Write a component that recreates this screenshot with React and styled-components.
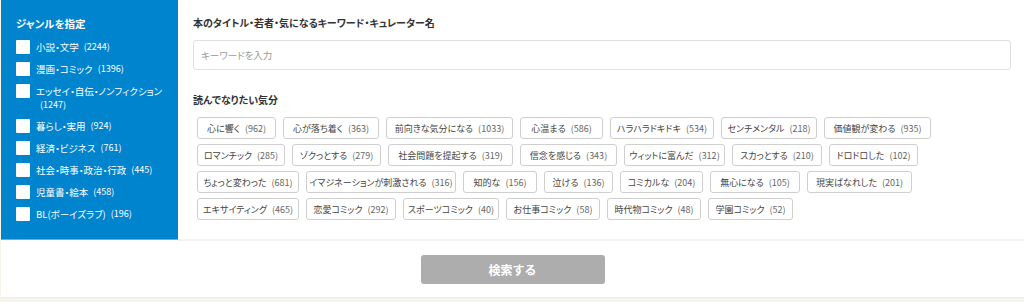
import React from 'react';
import styled, { createGlobalStyle } from 'styled-components';

const genres = [
  { label: '小説・文学', count: 2244 },
  { label: '漫画・コミック', count: 1396 },
  { label: 'エッセイ・自伝・ノンフィクション', count: 1247, wrap: true },
  { label: '暮らし・実用', count: 924 },
  { label: '経済・ビジネス', count: 761 },
  { label: '社会・時事・政治・行政', count: 445 },
  { label: '児童書・絵本', count: 458 },
  { label: 'BL(ボーイズラブ)', count: 196 },
];

// width of each tag, as on the original page
const moods = [
  ['心に響く', 962, 79],
  ['心が落ち着く', 363, 96],
  ['前向きな気分になる', 1033, 127],
  ['心温まる', 586, 83],
  ['ハラハラドキドキ', 534, 104],
  ['センチメンタル', 218, 96],
  ['価値観が変わる', 935, 107],
  ['ロマンチック', 285, 88],
  ['ゾクっとする', 279, 89],
  ['社会問題を提起する', 319, 125],
  ['信念を感じる', 343, 97],
  ['ウィットに富んだ', 312, 101],
  ['スカっとする', 210, 90],
  ['ドロドロした', 102, 89],
  ['ちょっと変わった', 681, 102],
  ['イマジネーションが刺激される', 316, 150],
  ['知的な', 156, 74],
  ['泣ける', 136, 69],
  ['コミカルな', 204, 83],
  ['無心になる', 105, 90],
  ['現実ばなれした', 201, 105],
  ['エキサイティング', 465, 102],
  ['恋愛コミック', 292, 90],
  ['スポーツコミック', 40, 96],
  ['お仕事コミック', 58, 94],
  ['時代物コミック', 48, 94],
  ['学園コミック', 52, 85],
];

const GlobalStyle = createGlobalStyle`
  html, body {
    margin: 0;
    padding: 0;
    background: #f5f5ec;
  }
  body {
    font-family: "Noto Sans CJK JP", "Noto Sans", sans-serif;
    font-feature-settings: "palt";
  }
`;

function App() {
  return (
    <>
      <GlobalStyle />
      <Page>
        <Top>
          <Sidebar>
            <SideTitle>ジャンルを指定</SideTitle>
            <GenreList>
              {genres.map((g) => (
                <GenreItem key={g.label}>
                  <Box />
                  <GenreLabel>
                    {g.label}
                    <GenreCount $wrap={g.wrap}>({g.count})</GenreCount>
                  </GenreLabel>
                </GenreItem>
              ))}
            </GenreList>
          </Sidebar>
          <Main>
            <Heading>本のタイトル・若者・気になるキーワード・キュレーター名</Heading>
            <Input placeholder="キーワードを入力" />
            <Heading $spaced>読んでなりたい気分</Heading>
            <Tags>
              {moods.map(([label, count, w]) => (
                <Tag key={label} $w={w}>
                  {label}
                  <TagCount>({count})</TagCount>
                </Tag>
              ))}
            </Tags>
          </Main>
        </Top>
        <Bottom>
          <SearchButton>検索する</SearchButton>
        </Bottom>
      </Page>
    </>
  );
}

export default App;

const Page = styled.div`
  margin-left: 1px;
  background: #fff;
`;

const Top = styled.div`
  display: flex;
  height: 241px;
`;

const Sidebar = styled.div`
  width: 177px;
  flex-shrink: 0;
  box-sizing: border-box;
  padding: 16px 0 0 15px;
  background: #0084cd;
  border-bottom: 1px solid #5fb3e3;
  margin-bottom: 1px;
`;

const SideTitle = styled.div`
  color: #fff;
  font-size: 10.5px;
  font-weight: 700;
  line-height: 15px;
`;

const GenreList = styled.ul`
  list-style: none;
  margin: 8px 0 0;
  padding: 0;
  display: flex;
  flex-direction: column;
  gap: 6px;
`;

const GenreItem = styled.li`
  display: flex;
  align-items: flex-start;
  gap: 6px;
`;

const Box = styled.span`
  width: 14px;
  height: 14px;
  margin-top: 1px;
  flex-shrink: 0;
  background: #fff;
  border-radius: 1px;
`;

const GenreLabel = styled.span`
  color: #fff;
  font-size: 9.5px;
  line-height: 16px;
  white-space: nowrap;
`;

const GenreCount = styled.span`
  font-size: 9px;
  display: ${(p) => (p.$wrap ? 'block' : 'inline-block')};
  vertical-align: top;
  margin-left: ${(p) => (p.$wrap ? '0' : '5px')};
  padding: ${(p) => (p.$wrap ? '0 0 2px 4px' : '0')};
  line-height: ${(p) => (p.$wrap ? '11px' : '16px')};
`;

const Main = styled.div`
  flex: 1;
  box-sizing: border-box;
  padding: 16px 13px 0 15px;
  border-bottom: 2px solid #f3f3f3;
`;

const Heading = styled.div`
  color: #333;
  font-size: 10px;
  font-weight: 700;
  line-height: 14px;
  margin-top: ${(p) => (p.$spaced ? '23px' : '0')};
`;

const Input = styled.input`
  display: block;
  box-sizing: border-box;
  width: 100%;
  height: 30px;
  margin-top: 10px;
  padding: 0 7px;
  border: 1px solid #e0e0e0;
  border-radius: 3px;
  font-family: inherit;
  font-feature-settings: "palt";
  font-size: 9.5px;
  color: #333;
  outline: none;

  &::placeholder {
    color: #9a9a9a;
  }
`;

const Tags = styled.div`
  display: flex;
  flex-wrap: wrap;
  gap: 5px 7px;
  margin-top: 10px;
  padding-left: 4px;
`;

const Tag = styled.button`
  width: ${(p) => p.$w}px;
  height: 22px;
  box-sizing: border-box;
  display: flex;
  align-items: center;
  justify-content: center;
  gap: 5px;
  padding: 0;
  background: #fff;
  border: 1px solid #cfcfcf;
  border-radius: 3px;
  font-family: inherit;
  font-feature-settings: "palt";
  font-size: 9px;
  color: #444;
  white-space: nowrap;
  cursor: pointer;
`;

const TagCount = styled.span`
  color: #666;
`;

const Bottom = styled.div`
  display: flex;
  justify-content: center;
  padding: 14px 0 13px;
  border-bottom: 1px solid #eeeee4;
`;

const SearchButton = styled.button`
  width: 184px;
  height: 29px;
  border: none;
  border-radius: 3px;
  background: #adadad;
  color: #fff;
  font-family: inherit;
  font-size: 12px;
  font-weight: 700;
  cursor: pointer;
`;
